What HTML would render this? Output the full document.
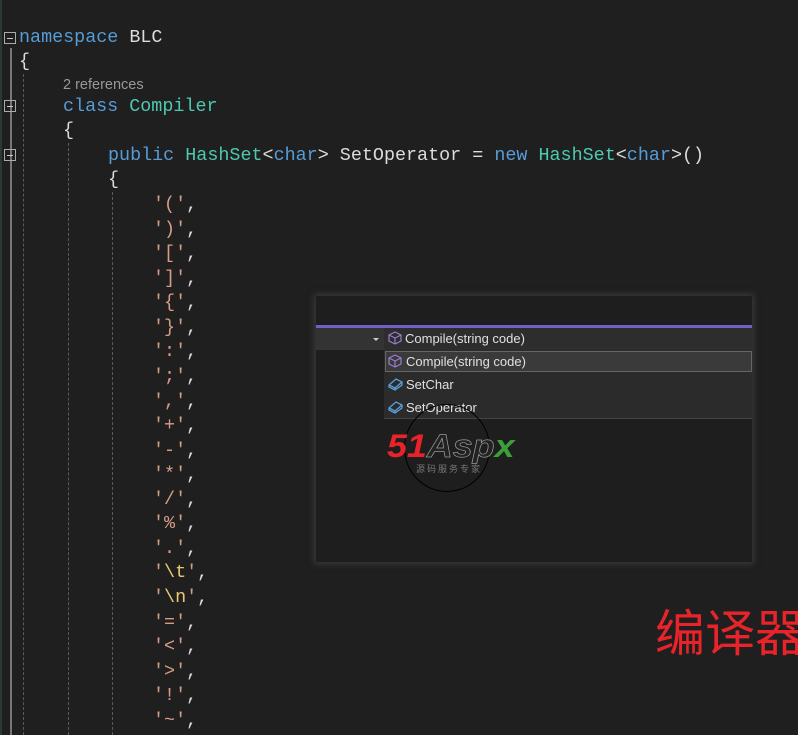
<!DOCTYPE html>
<html><head><meta charset="utf-8"><style>
html,body{margin:0;padding:0;background:#1f1f1f;width:798px;height:735px;overflow:hidden;position:relative}
.l{position:absolute;white-space:pre;font-family:"Liberation Mono",monospace;font-size:18.4px;color:#dcdcdc;line-height:24px}
.k{color:#569cd6}.t{color:#4ec9b0}.s{color:#d69d85}.e{color:#e8c873}.g{color:#dcdcdc}
.ref{position:absolute;left:63px;top:77px;font-family:"Liberation Sans",sans-serif;font-size:14.5px;color:#999}
.fold{position:absolute;left:4px;width:12px;height:12px;border:1px solid #aaa;box-sizing:border-box}
.fold:after{content:"";position:absolute;left:2px;top:5px;width:6px;height:1px;background:#ccc}
.vl{position:absolute;width:0;border-left:1px dashed #5a5a5a}
.pop{position:absolute;left:316px;top:296px;width:436px;height:266px;background:#1e1e1e;box-shadow:0 0 6px 2px #3a3a3a}
.it{position:absolute;font-family:"Liberation Sans",sans-serif;font-size:13px;color:#e0e0e0}
</style></head><body>
<div style="position:absolute;left:10px;top:48px;width:2px;height:687px;background:#777"></div>
<div style="position:absolute;left:0;top:0;width:2px;height:735px;background:#2a3a2e"></div>
<div class="vl" style="left:23px;top:74px;height:661px"></div>
<div class="vl" style="left:68px;top:143px;height:592px"></div>
<div class="vl" style="left:112px;top:192px;height:543px"></div>
<div class="fold" style="top:32px"></div>
<div class="fold" style="top:100px"></div>
<div class="fold" style="top:149px"></div>
<div class="l" style="left:19px;top:26px"><span class="k">namespace</span> BLC</div>
<div class="l" style="left:19px;top:50px">{</div>
<div class="ref">2 references</div>
<div class="l" style="left:63px;top:95px"><span class="k">class</span> <span class="t">Compiler</span></div>
<div class="l" style="left:63px;top:119px">{</div>
<div class="l" style="left:108px;top:144px"><span class="k">public</span> <span class="t">HashSet</span>&lt;<span class="k">char</span>&gt; SetOperator = <span class="k">new</span> <span class="t">HashSet</span>&lt;<span class="k">char</span>&gt;()</div>
<div class="l" style="left:108px;top:168px">{</div>
<div class="l" style="left:153px;top:193px;line-height:24.57px"><span class="s">'('</span>,
<span class="s">')'</span>,
<span class="s">'['</span>,
<span class="s">']'</span>,
<span class="s">'{'</span>,
<span class="s">'}'</span>,
<span class="s">':'</span>,
<span class="s">';'</span>,
<span class="s">','</span>,
<span class="s">'+'</span>,
<span class="s">'-'</span>,
<span class="s">'*'</span>,
<span class="s">'/'</span>,
<span class="s">'%'</span>,
<span class="s">'.'</span>,
<span class="s">'</span><span class="e">\t</span><span class="s">'</span>,
<span class="s">'</span><span class="e">\n</span><span class="s">'</span>,
<span class="s">'='</span>,
<span class="s">'&lt;'</span>,
<span class="s">'&gt;'</span>,
<span class="s">'!'</span>,
<span class="s">'~'</span>,</div>
<div class="pop">
 <div style="position:absolute;left:0;top:29px;width:436px;height:3px;background:#7160c8"></div>
 <div style="position:absolute;left:0;top:32px;width:68px;height:22px;background:#333"></div>
 <div style="position:absolute;left:57px;top:42px;border:3px solid transparent;border-top:3px solid #ccc"></div>
 <div style="position:absolute;left:68px;top:32px;width:368px;height:22px;background:#2d2d2d"></div>
 <div style="position:absolute;left:68px;top:54px;width:368px;height:68px;background:#2b2b2b;border-bottom:1px solid #444"></div>
 <div style="position:absolute;left:69px;top:55px;width:367px;height:21px;background:#3a3a3a;border:1px solid #666;box-sizing:border-box"></div>
 <svg style="position:absolute;left:72px;top:35px" width="14" height="14"><path d="M7 1L13 4V10L7 13L1 10V4Z M1 4L7 7L13 4 M7 7V13" fill="none" stroke="#9a7ccf" stroke-width="1.2"/></svg>
 <svg style="position:absolute;left:72px;top:58px" width="14" height="14"><path d="M7 1L13 4V10L7 13L1 10V4Z M1 4L7 7L13 4 M7 7V13" fill="none" stroke="#9a7ccf" stroke-width="1.2"/></svg>
 <svg style="position:absolute;left:72px;top:81px" width="15" height="14"><path d="M1 8L8 2L14 5V8L7 13L1 10Z M1 8L7 11L14 5 M7 11V13" fill="none" stroke="#5aa0dc" stroke-width="1.3"/></svg>
 <svg style="position:absolute;left:72px;top:104px" width="15" height="14"><path d="M1 8L8 2L14 5V8L7 13L1 10Z M1 8L7 11L14 5 M7 11V13" fill="none" stroke="#5aa0dc" stroke-width="1.3"/></svg>
 <div class="it" style="left:89px;top:35px">Compile(string code)</div>
 <div class="it" style="left:90px;top:58px">Compile(string code)</div>
 <div class="it" style="left:90px;top:81px">SetChar</div>
 <div class="it" style="left:90px;top:104px">SetOperator</div>
 <div style="position:absolute;left:88px;top:108px;width:84px;height:86px;border:1.5px solid #000;border-radius:50%"></div>
 <div style="position:absolute;left:71px;top:132px;font-family:'Liberation Sans',sans-serif;font-weight:bold;font-style:italic;font-size:32px;letter-spacing:0px;transform:scaleX(1.12);transform-origin:left"><span style="color:#e8242a">51</span><span style="color:#222;-webkit-text-stroke:0.7px #999">Asp</span><span style="color:#3aa03a">x</span></div>
 <div style="position:absolute;left:100px;top:166px;font-family:'Noto Sans CJK SC',sans-serif;font-size:9px;color:#777;letter-spacing:2px">源码服务专家</div>
</div>
<div style="position:absolute;left:655px;top:600px;font-family:'Noto Sans CJK SC',sans-serif;font-size:50px;color:#e8242a;line-height:60px;white-space:nowrap">编译器</div>
</body></html>
